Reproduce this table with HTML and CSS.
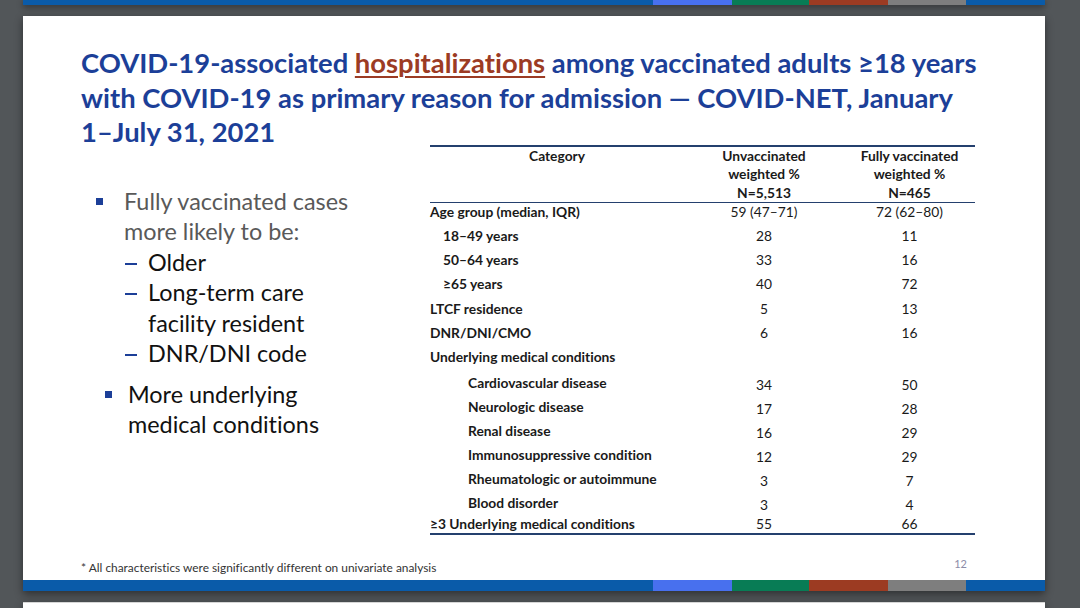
FILE: index.html
```html
<!DOCTYPE html>
<html lang="en">
<head>
<meta charset="utf-8">
<title>COVID-NET slide 12</title>
<link rel="stylesheet" href="styles.css">
</head>
<body>
<div class="viewer">
  <div class="bar bar-prev">
    <span class="seg seg-main"></span><span class="seg seg-lblue"></span><span class="seg seg-green"></span><span class="seg seg-red"></span><span class="seg seg-gray"></span><span class="seg seg-blue"></span>
  </div>

  <div class="page">
    <div class="slide">
      <h1 class="title">COVID-19-associated <span class="hl">hospitalizations</span> among vaccinated adults ≥18 years<br>with COVID-19 as primary reason for admission — COVID-NET, January<br>1–July 31, 2021</h1>

      <div class="content">
        <div class="points">
          <ul class="bullets">
            <li class="b1">
              <span class="lead">Fully vaccinated cases more likely to be:</span>
              <ul class="subs">
                <li>Older</li>
                <li>Long-term care facility resident</li>
                <li>DNR/DNI code</li>
              </ul>
            </li>
            <li class="b2">More underlying medical conditions</li>
          </ul>
        </div>

        <div class="table-wrap">
          <table class="data">
            <colgroup><col class="c1"><col class="c2"><col class="c3"></colgroup>
            <thead>
              <tr>
                <th>Category</th>
                <th>Unvaccinated<br>weighted %<br>N=5,513</th>
                <th>Fully vaccinated<br>weighted %<br>N=465</th>
              </tr>
            </thead>
            <tbody>
              <tr class="r-first"><td class="lbl">Age group (median, IQR)</td><td>59 (47–71)</td><td>72 (62–80)</td></tr>
              <tr><td class="lbl ind1">18–49 years</td><td>28</td><td>11</td></tr>
              <tr><td class="lbl ind1">50–64 years</td><td>33</td><td>16</td></tr>
              <tr><td class="lbl ind1">≥65 years</td><td>40</td><td>72</td></tr>
              <tr><td class="lbl">LTCF residence</td><td>5</td><td>13</td></tr>
              <tr><td class="lbl">DNR/DNI/CMO</td><td>6</td><td>16</td></tr>
              <tr class="r-group"><td class="lbl">Underlying medical conditions</td><td></td><td></td></tr>
              <tr class="r-cond"><td class="lbl ind2">Cardiovascular disease</td><td>34</td><td>50</td></tr>
              <tr class="r-cond"><td class="lbl ind2">Neurologic disease</td><td>17</td><td>28</td></tr>
              <tr class="r-cond"><td class="lbl ind2">Renal disease</td><td>16</td><td>29</td></tr>
              <tr class="r-cond"><td class="lbl ind2">Immunosuppressive condition</td><td>12</td><td>29</td></tr>
              <tr class="r-cond"><td class="lbl ind2">Rheumatologic or autoimmune</td><td>3</td><td>7</td></tr>
              <tr class="r-cond"><td class="lbl ind2">Blood disorder</td><td>3</td><td>4</td></tr>
              <tr class="r-last"><td class="lbl">≥3 Underlying medical conditions</td><td>55</td><td>66</td></tr>
            </tbody>
          </table>
        </div>
      </div>

      <div class="footer">
        <span class="note">* All characteristics were significantly different on univariate analysis</span>
        <span class="pnum">12</span>
      </div>
    </div>
    <div class="bar">
      <span class="seg seg-main"></span><span class="seg seg-lblue"></span><span class="seg seg-green"></span><span class="seg seg-red"></span><span class="seg seg-gray"></span><span class="seg seg-blue"></span>
    </div>
  </div>

  <div class="page page-next"></div>
</div>
</body>
</html>
```

FILE: styles.css
```css
* { box-sizing: border-box; }

html, body {
  margin: 0;
  padding: 0;
  height: 100%;
  overflow: hidden;
}

body {
  background: #525659;
  font-family: Lato, "Open Sans", "Liberation Sans", sans-serif;
  font-variant-ligatures: none;
}

.viewer {
  width: 1022px;
  margin-left: 23px;
}

/* colour bar at top/bottom of a slide */
.bar {
  display: flex;
  height: 11px;
}
.bar-prev {
  height: 5px;
  box-shadow: 0 2px 6px rgba(0,0,0,0.45);
}
.seg { display: block; height: 100%; }
.seg-main  { flex: 1; background: #0a5ba9; }
.seg-lblue { width: 79px; background: #4870ee; }
.seg-green { width: 77px; background: #087c55; }
.seg-red   { width: 79px; background: #9c3b22; }
.seg-gray  { width: 78px; background: #7e7e7e; }
.seg-blue  { width: 79px; background: #0a5ba9; }

.page {
  margin-top: 11px;
  box-shadow: 0 3px 8px rgba(0,0,0,0.45);
}

.slide {
  background: #ffffff;
  height: 564px;
  padding: 30px 0 0 58px;
  display: flex;
  flex-direction: column;
}

.title {
  margin: 0;
  font-size: 27.4px;
  line-height: 34.5px;
  font-weight: 700;
  color: #1c3f98;
  letter-spacing: 0;
  white-space: nowrap;
}
.title .hl {
  color: #9c3b24;
  text-decoration: underline;
  text-decoration-thickness: 2px;
  text-underline-offset: 3px;
}

.content {
  display: flex;
  margin-top: -5px;
}

.points {
  width: 349px;
  padding-top: 41px;
}

.bullets {
  list-style: none;
  margin: 0;
  padding: 0;
  font-size: 23.4px;
  line-height: 30.5px;
}
.bullets > li {
  position: relative;
}
.bullets > li::before {
  content: "";
  position: absolute;
  width: 7px;
  height: 7px;
  background: #1c3f98;
  top: 12px;
}
.b1 { padding-left: 43px; }
.b1::before { left: 15px; }
.b1 .lead { color: #595959; display: block; width: 250px; }

.b2 {
  padding-left: 47px;
  margin-top: 10px;
  color: #111111;
  width: 280px;
}
.b2::before { left: 24px; }

.subs {
  list-style: none;
  margin: 0;
  padding: 0;
  color: #111111;
}
.subs li {
  position: relative;
  padding-left: 24px;
  width: 210px;
}
.subs li::before {
  content: "";
  position: absolute;
  left: 1px;
  top: 16px;
  width: 12px;
  height: 2px;
  background: #1c3f98;
}

.data {
  border-collapse: collapse;
  width: 545px;
  table-layout: fixed;
  font-size: 13.8px;
  color: #1a1a1a;
  border-top: 2px solid #24406e;
  border-bottom: 2px solid #24406e;
}
.data col.c1 { width: 254px; }
.data col.c2 { width: 160px; }
.data col.c3 { width: 131px; }

.data th {
  font-weight: 700;
  text-align: center;
  line-height: 18.5px;
  padding: 0;
  vertical-align: top;
  border-bottom: 1.5px solid #24406e;
}
.data td {
  padding: 0;
  text-align: center;
  vertical-align: middle;
  height: 24.3px;
  line-height: 16px;
}
.data td.lbl {
  text-align: left;
  font-weight: 700;
}
.data td.ind1 { padding-left: 13px; }
.data td.ind2 { padding-left: 38px; }

.data tr.r-first td { height: 21px; padding-bottom: 3px; }
.data tr.r-group td { height: 25.3px; padding-bottom: 1px; }
.data tr.r-cond td { height: 24px; padding-top: 2px; }
.data tr.r-cond td:not(.lbl) { padding-top: 5px; }
.data tr.r-last td { height: 20px; }

.footer {
  margin-top: auto;
  display: flex;
  justify-content: space-between;
  align-items: flex-end;
  padding: 0 78px 5px 0;
}
.note {
  font-size: 11.9px;
  color: #333333;
  line-height: 14px;
}
.pnum {
  font-size: 11px;
  color: #8c8ca8;
  line-height: 14px;
  margin-bottom: 4px;
}

.page-next {
  background: #ffffff;
  height: 6px;
  border-top: 1px solid #d6d6d6;
}
```
